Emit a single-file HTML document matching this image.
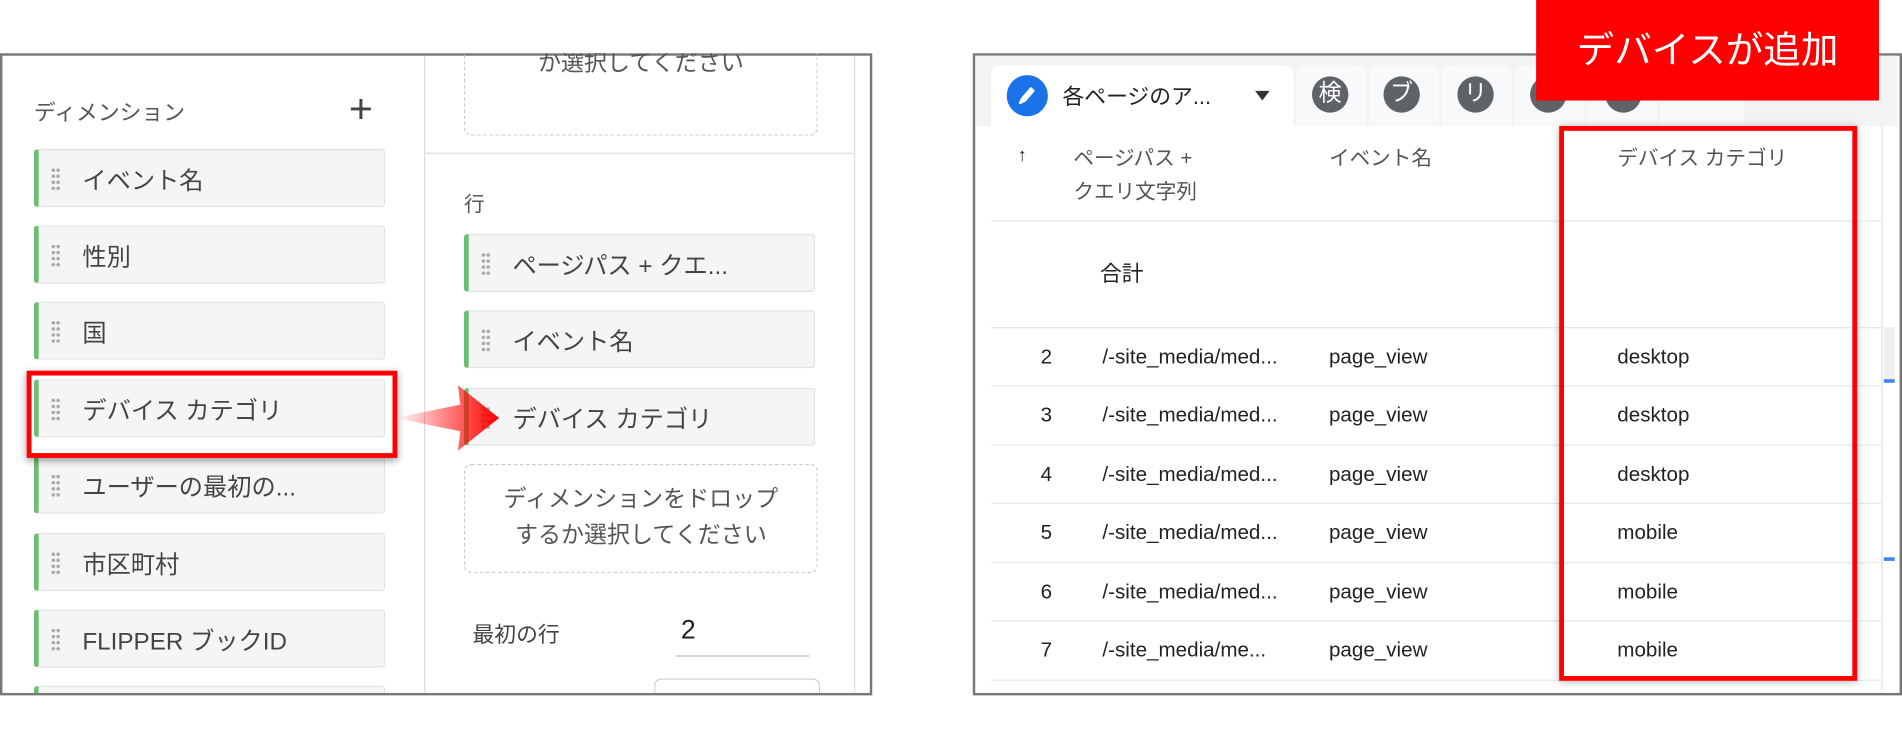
<!DOCTYPE html>
<html><head><meta charset="utf-8"><style>
html,body{margin:0;padding:0;background:#fff;width:1902px;height:695px;overflow:hidden}
#w{position:absolute;left:0;top:0;width:1570px;height:574px;transform:scale(1.21146);transform-origin:0 0;font-family:"Liberation Sans","Noto Sans CJK JP",sans-serif;color:#3c4043}
.a{position:absolute}
.clip{position:absolute;left:0;top:0;width:1570px;height:574px;clip-path:inset(44px 852px 2px 0)}
.chip{position:absolute;width:290px;height:48px;background:#f5f5f5;border:1px solid #e2e2e2;border-left:4px solid #6bbf73;border-radius:3px;box-sizing:border-box;font-size:20px;line-height:52px;padding-left:36px;color:#444}
.chip:before{content:"";position:absolute;left:10px;top:14px;width:8px;height:20px;background-image:radial-gradient(circle,#aaa 1.4px,transparent 1.6px);background-size:4px 5px}
.dash{position:absolute;border:1.5px dashed #ccc;border-radius:6px;box-sizing:border-box;text-align:center;font-size:19px;color:#555;line-height:30px}
.circ{position:absolute;top:63px;width:30px;height:30px;border-radius:50%;background:#5f6368;color:#fff;font-size:19px;text-align:center;line-height:30px}
.row{position:absolute;left:818px;width:735px;height:48px;border-top:1px solid #e8e8e8;font-size:17px;line-height:48px;color:#222}
.row span{position:absolute}
</style></head><body><div id="w">
<!-- left panel -->
<div class="a" style="left:0;top:44px;width:716px;height:526px;border:2px solid #777"></div>
<div class="clip">
<div class="a" style="left:350px;top:46px;width:1px;height:526px;background:#ddd"></div>
<div class="a" style="left:705px;top:46px;width:1px;height:526px;background:#ddd"></div>
<div class="a" style="left:351px;top:126px;width:354px;height:1px;background:#ddd"></div>
<div class="a" style="left:28px;top:79px;font-size:18px;color:#555">ディメンション</div>
<div class="a" style="left:288px;top:70px;font-size:34px;color:#444;line-height:40px;font-weight:300">+</div>
<div class="chip" style="left:28px;top:123px">イベント名</div>
<div class="chip" style="left:28px;top:186px">性別</div>
<div class="chip" style="left:28px;top:249px">国</div>
<div class="chip" style="left:28px;top:313px">デバイス カテゴリ</div>
<div class="chip" style="left:28px;top:376px">ユーザーの最初の...</div>
<div class="chip" style="left:28px;top:440px">市区町村</div>
<div class="chip" style="left:28px;top:503px">FLIPPER ブックID</div>
<div class="chip" style="left:28px;top:566px"></div>
<div class="dash" style="left:383px;top:0px;width:292px;height:112px;padding-top:37px">か選択してください</div>
<div class="a" style="left:383px;top:154px;font-size:17px;color:#555">行</div>
<div class="chip" style="left:383px;top:193px">ページパス + クエ...</div>
<div class="chip" style="left:383px;top:256px">イベント名</div>
<div class="chip" style="left:383px;top:320px">デバイス カテゴリ</div>
<div class="dash" style="left:383px;top:383px;width:292px;height:90px;padding-top:14px">ディメンションをドロップ<br>するか選択してください</div>
<div class="a" style="left:390px;top:510px;font-size:18px;color:#444">最初の行</div>
<div class="a" style="left:562px;top:507px;font-size:22px;color:#222">2</div>
<div class="a" style="left:558px;top:541px;width:110px;height:1px;background:#bbb"></div>
<div class="a" style="left:540px;top:560px;width:135px;height:14px;border:1px solid #ccc;border-bottom:none;border-radius:6px 6px 0 0"></div>
</div>
<div class="a" style="left:22px;top:306px;width:298px;height:64px;border:4px solid #f00;box-shadow:0 2px 6px rgba(0,0,0,.4)"></div>
<!-- arrow -->
<svg class="a" style="left:322px;top:318px" width="92" height="54"><defs><linearGradient id="g" x1="0" x2="1"><stop offset="0" stop-color="#f00" stop-opacity="0"/><stop offset="1" stop-color="#f00"/></linearGradient></defs><polygon points="4,27 58,16 56,0 90,27 56,54 58,38" fill="url(#g)"/></svg>
<!-- right panel -->
<div class="a" style="left:803px;top:44px;width:763px;height:526px;border:2px solid #777"></div>
<div class="a" style="left:805px;top:46px;width:761px;height:58px;background:#f1f3f4"></div>
<div class="a" style="left:818px;top:54px;width:250px;height:52px;background:#fff;border-radius:8px 8px 0 0"></div>
<div class="a" style="left:1070px;top:54px;width:58px;height:50px;background:#f8f9fa;border-radius:6px 6px 0 0"></div>
<div class="a" style="left:1130px;top:54px;width:58px;height:50px;background:#f8f9fa;border-radius:6px 6px 0 0"></div>
<div class="a" style="left:1190px;top:54px;width:58px;height:50px;background:#f8f9fa;border-radius:6px 6px 0 0"></div>
<div class="a" style="left:1250px;top:54px;width:58px;height:50px;background:#f8f9fa;border-radius:6px 6px 0 0"></div>
<div class="a" style="left:1310px;top:54px;width:58px;height:50px;background:#f8f9fa;border-radius:6px 6px 0 0"></div>
<div class="a" style="left:1370px;top:54px;width:70px;height:50px;background:#f8f9fa;border-radius:6px 6px 0 0"></div>
<div class="a" style="left:831px;top:62px;width:34px;height:34px;border-radius:50%;background:#1a73e8"></div>
<svg class="a" style="left:838px;top:69px" width="20" height="20"><path d="M5 15 L14 4 M4 16 L6 12 L13 4 L15 6 L8 14 Z" stroke="#fff" stroke-width="2" fill="none" stroke-linejoin="round"/></svg>
<div class="a" style="left:877px;top:66px;font-size:18px;color:#222">各ページのア...</div>
<div class="a" style="left:1036px;top:75px;width:0;height:0;border-left:6px solid transparent;border-right:6px solid transparent;border-top:8px solid #333"></div>
<div class="circ" style="left:1083px">検</div>
<div class="circ" style="left:1142px">ブ</div>
<div class="circ" style="left:1203px">リ</div>
<div class="circ" style="left:1263px"></div>
<div class="circ" style="left:1325px"></div>
<div class="a" style="left:818px;top:104px;width:735px;height:78px;background:#fff"></div>
<div class="a" style="left:840px;top:120px;font-size:15px;color:#222">↑</div>
<div class="a" style="left:886px;top:117px;font-size:17px;color:#555;line-height:28px">ページパス +<br>クエリ文字列</div>
<div class="a" style="left:1097px;top:117px;font-size:17px;color:#555;line-height:28px">イベント名</div>
<div class="a" style="left:1335px;top:117px;font-size:17px;color:#555;line-height:28px">デバイス カテゴリ</div>
<div class="a" style="left:818px;top:182px;width:735px;height:1px;background:#e8e8e8"></div>
<div class="a" style="left:908px;top:212px;font-size:18px;color:#222">合計</div>
<div class="row" style="top:270px"><span style="left:41px">2</span><span style="left:92px">/-site_media/med...</span><span style="left:279px">page_view</span><span style="left:517px">desktop</span></div>
<div class="row" style="top:318px"><span style="left:41px">3</span><span style="left:92px">/-site_media/med...</span><span style="left:279px">page_view</span><span style="left:517px">desktop</span></div>
<div class="row" style="top:367px"><span style="left:41px">4</span><span style="left:92px">/-site_media/med...</span><span style="left:279px">page_view</span><span style="left:517px">desktop</span></div>
<div class="row" style="top:415px"><span style="left:41px">5</span><span style="left:92px">/-site_media/med...</span><span style="left:279px">page_view</span><span style="left:517px">mobile</span></div>
<div class="row" style="top:464px"><span style="left:41px">6</span><span style="left:92px">/-site_media/med...</span><span style="left:279px">page_view</span><span style="left:517px">mobile</span></div>
<div class="row" style="top:512px"><span style="left:41px">7</span><span style="left:92px">/-site_media/me...</span><span style="left:279px">page_view</span><span style="left:517px">mobile</span></div>
<div class="a" style="left:818px;top:561px;width:735px;height:1px;background:#e8e8e8"></div>
<div class="a" style="left:1553px;top:104px;width:1px;height:466px;background:#e0e0e0"></div>
<div class="a" style="left:1555px;top:270px;width:9px;height:45px;background:#eee"></div>
<div class="a" style="left:1555px;top:313px;width:9px;height:3px;background:#4285f4"></div>
<div class="a" style="left:1555px;top:460px;width:9px;height:3px;background:#4285f4"></div>
<div class="a" style="left:1287px;top:104px;width:238px;height:450px;border:4px solid #f00;box-shadow:0 1px 6px rgba(0,0,0,.3)"></div>
<div class="a" style="left:1268px;top:0;width:283px;height:83px;background:#f00;color:#fff;font-size:31px;line-height:83px;text-align:center">デバイスが追加</div>
</div></body></html>
